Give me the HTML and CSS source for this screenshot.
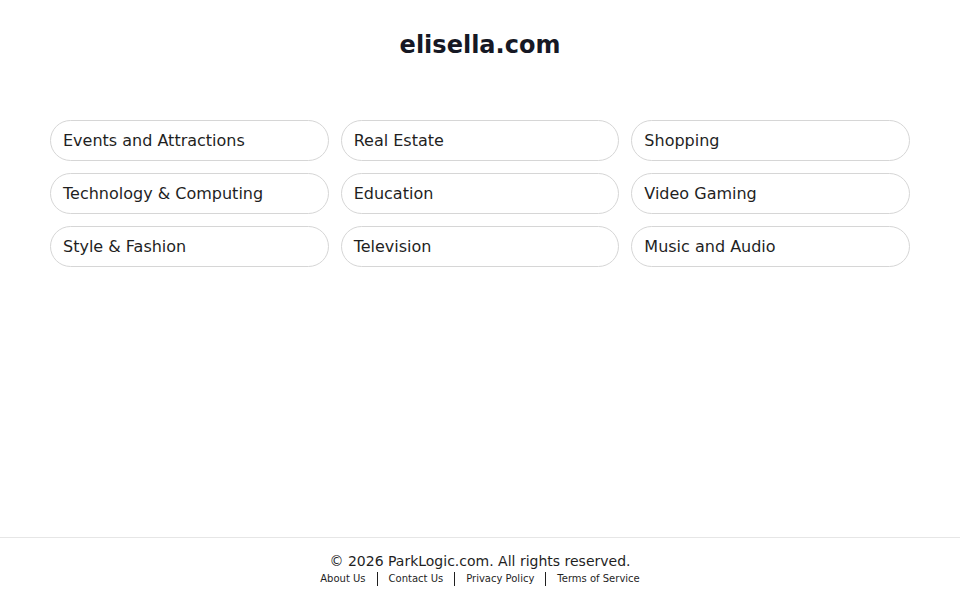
FILE: index.html
```html
<!DOCTYPE html>
<html lang="en">
<head>
  <meta charset="UTF-8">
  <meta name="viewport" content="width=device-width, initial-scale=1.0">
  <title>elisella.com</title>
  <link rel="stylesheet" href="styles.css">
</head>
<body>
  <div class="page">
    <h1 class="title">elisella.com</h1>

    <div class="links">
      <a class="link-btn" href="#">Events and Attractions</a>
      <a class="link-btn" href="#">Real Estate</a>
      <a class="link-btn" href="#">Shopping</a>
      <a class="link-btn" href="#">Technology &amp; Computing</a>
      <a class="link-btn" href="#">Education</a>
      <a class="link-btn" href="#">Video Gaming</a>
      <a class="link-btn" href="#">Style &amp; Fashion</a>
      <a class="link-btn" href="#">Television</a>
      <a class="link-btn" href="#">Music and Audio</a>
    </div>

    <footer class="footer">
      <p class="copy">&copy; 2026 ParkLogic.com. All rights reserved.</p>
      <div class="footer-links">
        <a href="#">About Us</a>
        <span class="sep"></span>
        <a href="#">Contact Us</a>
        <span class="sep"></span>
        <a href="#">Privacy Policy</a>
        <span class="sep"></span>
        <a href="#">Terms of Service</a>
      </div>
    </footer>
  </div>
</body>
</html>
```

FILE: styles.css
```css
body{
  margin: 0;
  font-family: "DejaVu Sans", sans-serif;
  background: #ffffff;
  color: #1f1f1f;
}
.page{
  min-height: 100vh;
  display: flex;
  flex-direction: column;
}
.title{
  margin: 31px 0 0;
  font-size: 24px;
  line-height: 29px;
  text-align: center;
  color: #161824;
}
.links{
  width: 860px;
  margin: 60px auto 0;
  display: grid;
  grid-template-columns: repeat(3, 1fr);
  gap: 12px;
}
.link-btn{
  display: block;
  height: 39px;
  line-height: 39px;
  padding: 0 12px;
  border: 1px solid #d6d6d6;
  border-radius: 21px;
  font-size: 16px;
  color: #1f1f1f;
  text-decoration: none;
}
.footer{
  margin-top: auto;
  border-top: 1px solid #e6e6e6;
  padding: 15px 0 13px;
  text-align: center;
}
.copy{
  margin: 0;
  font-size: 14px;
  line-height: 17px;
  color: #1f1f1f;
}
.footer-links{
  display: flex;
  justify-content: center;
  align-items: center;
  gap: 11px;
  margin-top: 1px;
}
.footer-links a{
  font-size: 10px;
  line-height: 16px;
  color: #1f1f1f;
  text-decoration: none;
}
.sep{
  width: 1px;
  height: 14px;
  background: #1f1f1f;
}
```
